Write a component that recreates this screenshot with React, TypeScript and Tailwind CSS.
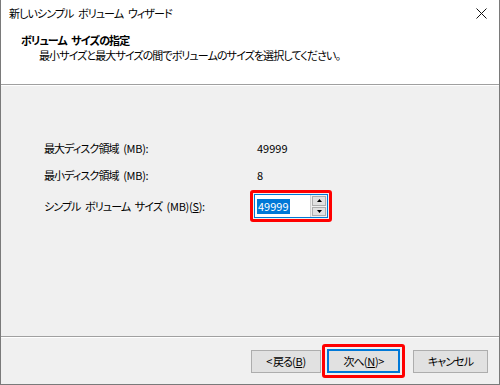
import React from "react";

const font = "[font-family:'Noto_Sans_CJK_JP','Noto_Sans',sans-serif] [font-feature-settings:'palt']";

export default function App() {
  return (
    <div className={`w-[500px] h-[385px] flex flex-col bg-[#f0f0f0] border-x border-b border-[#7a7a7a] text-[11px] tracking-[-0.9px] [word-spacing:3px] leading-none text-black ${font}`}>
      <div className="h-[85px] bg-white flex flex-col border-b border-[#a0a0a0]">
        <div className="flex items-center justify-between h-[26px] pl-[8px] pr-[12px]">
          <span className="mt-[1px]">新しいシンプル ボリューム ウィザード</span>
          <svg width="11" height="11" viewBox="0 0 11 11" className="mt-[1px]">
            <path d="M0.5 0.5 L10.5 10.5 M10.5 0.5 L0.5 10.5" stroke="#111" strokeWidth="1" />
          </svg>
        </div>
        <div className="pl-[20px] pt-[8px] h-[21px] font-bold leading-[13px]">ボリューム サイズの指定</div>
        <div className="pl-[38px] mt-[1px] leading-[14px]">最小サイズと最大サイズの間でボリュームのサイズを選択してください。</div>
      </div>
      <div className="h-px bg-white" />
      <div className="flex-1 flex flex-col pl-[43px] pt-[55px]">
        <div className="flex items-center h-[14px]">
          <span className="w-[213px]">最大ディスク領域 <span className="tracking-[-0.3px]">(MB):</span></span>
          <span className="tracking-normal">49999</span>
        </div>
        <div className="flex items-center h-[14px] mt-[13px]">
          <span className="w-[213px]">最小ディスク領域 <span className="tracking-[-0.3px]">(MB):</span></span>
          <span>8</span>
        </div>
        <div className="flex items-center mt-[8px]">
          <span className="w-[206px]">シンプル ボリューム サイズ <span className="tracking-[-0.3px]">(MB)(<span className="underline">S</span>):</span></span>
          <div className="border-[3px] border-[#ff0000] rounded-[3px] p-[1px]">
            <div className="flex w-[74px] h-[24px] border border-[#0078d7] bg-white">
              <div className="flex-1 flex items-center pl-[2px]">
                <span className="bg-[#0078d7] text-white px-[1px] leading-[15px] tracking-normal">49999</span>
              </div>
              <div className="w-[17px] flex flex-col border-l border-[#d0d0d0] bg-[#f0f0f0] p-[1px] gap-[1px]">
                <div className="flex-1 flex items-center justify-center border border-[#adadad] bg-[#e1e1e1]">
                  <svg width="5" height="3" viewBox="0 0 5 3"><path d="M2.5 0 L5 3 L0 3Z" fill="#000" /></svg>
                </div>
                <div className="flex-1 flex items-center justify-center border border-[#adadad] bg-[#e1e1e1]">
                  <svg width="5" height="3" viewBox="0 0 5 3"><path d="M0 0 L5 0 L2.5 3Z" fill="#000" /></svg>
                </div>
              </div>
            </div>
          </div>
        </div>
      </div>
      <div className="h-px bg-[#a0a0a0]" />
      <div className="h-px bg-white" />
      <div className="h-[46px] flex items-center justify-end pr-[11px]">
        <button className="w-[70px] h-[23px] border border-[#adadad] bg-[#e1e1e1] flex items-center justify-center">
          &lt; 戻る<span className="tracking-[-0.3px]">(<span className="underline">B</span>)</span>
        </button>
        <div className="ml-[1px] border-[3px] border-[#ff0000] rounded-[3px] p-[2px]">
          <button className="w-[73px] h-[24px] border-2 border-[#0078d7] bg-[#e1e1e1] flex items-center justify-center">
            次へ<span className="tracking-[-0.3px]">(<span className="underline">N</span>)</span> &gt;
          </button>
        </div>
        <button className="ml-[8px] w-[75px] h-[23px] border border-[#adadad] bg-[#e1e1e1] flex items-center justify-center">
          キャンセル
        </button>
      </div>
    </div>
  );
}
